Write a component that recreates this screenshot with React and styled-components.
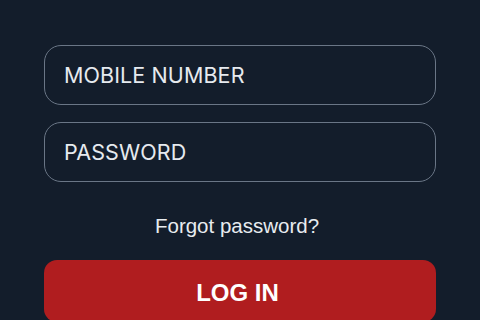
import styled, { createGlobalStyle } from "styled-components"

const Global = createGlobalStyle`
  html, body {
    margin: 0;
    padding: 0;
    background: #131d2b;
    overflow: hidden;
  }
`

const Page = styled.div`
  width: 480px;
  height: 320px;
  box-sizing: border-box;
  padding: 45px 44px 0;
  background: #131d2b;
  display: flex;
  flex-direction: column;
`

const Field = styled.div`
  height: 60px;
  flex-shrink: 0;
  box-sizing: border-box;
  border: 1.5px solid #6a7686;
  border-radius: 17px;
  display: flex;
  align-items: center;
  padding: 0 19px;
  margin-bottom: ${(p) => p.gap || 0}px;
  font-family: Inter, "Noto Sans", sans-serif;
  font-size: 21.5px;
  color: #e6eaef;
  letter-spacing: 0.1px;
`

const Forgot = styled.a`
  display: block;
  text-align: center;
  margin: 32px 0 22px;
  font-family: "Liberation Sans", Arial, sans-serif;
  font-size: 20.5px;
  line-height: 24px;
  color: #e8ecf0;
  text-decoration: none;
  padding-right: 6px;
`

const LoginButton = styled.button`
  height: 62px;
  flex-shrink: 0;
  width: 100%;
  border: none;
  border-radius: 13px;
  background: #b01d1f;
  color: #fff;
  font-family: "Liberation Sans", Arial, sans-serif;
  font-weight: 700;
  font-size: 24px;
  padding: 3px 5px 0 0;
`

export default function App() {
  return (
    <>
      <Global />
      <Page>
        <Field gap={17}>MOBILE NUMBER</Field>
        <Field>PASSWORD</Field>
        <Forgot href="#">Forgot password?</Forgot>
        <LoginButton>LOG IN</LoginButton>
      </Page>
    </>
  )
}
